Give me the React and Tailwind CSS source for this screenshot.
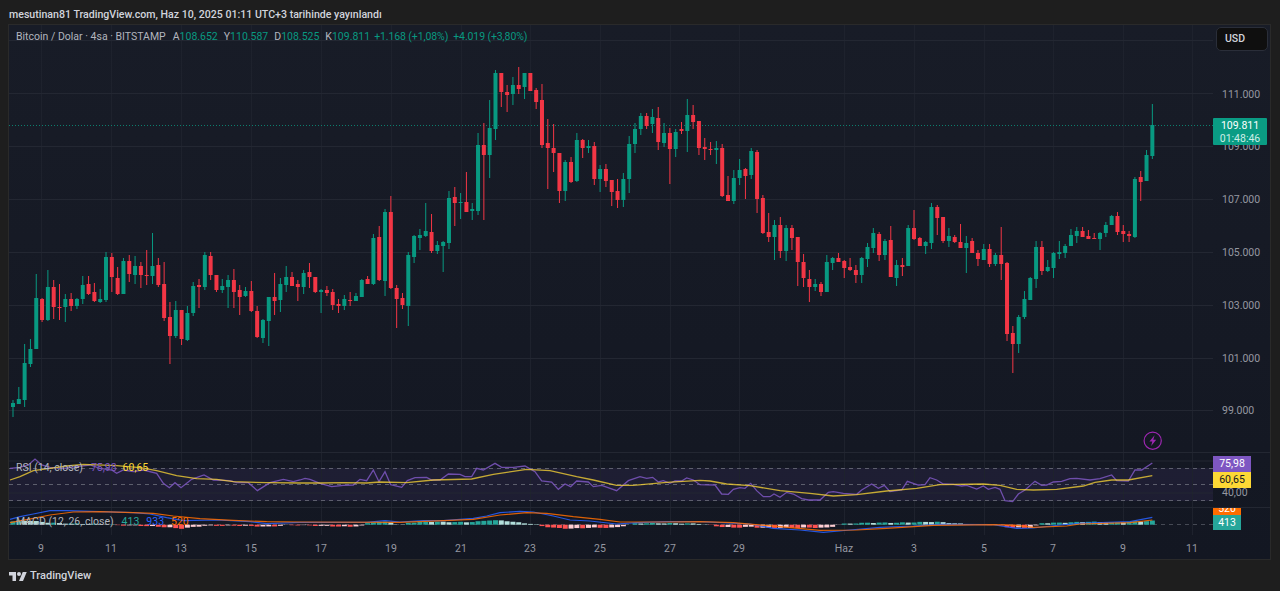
// BTC/USD chart snapshot. All chart drawing data is in page pixel coordinates.
const GREEN = '#089981';
const RED = '#f23645';

// [bodyTop, bodyBottom, wickTop, wickBottom, up]
const candles = [
  [403,407,400,417,1],[399,404,387,404,1],[363,400,344,407,1],[349,364,339,367,1],[298,349,274,349,1],
  [299,320,298,322,0],[287,320,270,321,1],[287,307,280,319,0],[307,308,284,320,0],[299,307,294,322,1],
  [299,306,293,311,0],[299,306,298,309,1],[285,299,276,304,1],[284,294,276,295,0],[292,301,283,302,0],
  [299,302,289,303,1],[257,300,252,302,1],[257,277,253,292,0],[278,294,267,295,0],[261,294,258,294,1],
  [261,274,255,282,0],[266,275,256,284,1],[266,275,262,288,0],[275,276,250,285,0],[266,276,233,284,1],
  [265,285,258,287,0],[284,318,262,321,0],[317,336,302,364,0],[310,336,301,338,1],[310,339,310,345,0],
  [313,340,306,341,1],[286,313,282,316,1],[285,287,279,308,0],[255,287,252,290,1],[256,275,252,280,0],
  [275,290,275,292,0],[286,290,279,293,1],[280,287,275,308,1],[280,292,269,308,0],[290,297,285,315,0],
  [291,296,287,297,1],[291,311,281,312,0],[311,337,306,338,0],[320,338,319,343,1],[297,321,297,346,1],
  [297,301,273,315,0],[284,300,278,312,1],[277,285,266,292,1],[277,286,272,286,0],[284,287,280,301,0],
  [273,287,270,294,1],[272,277,263,288,0],[277,292,277,293,0],[290,292,289,313,1],[290,293,286,296,0],
  [292,305,289,310,0],[304,306,299,313,0],[299,306,295,310,1],[300,301,292,306,0],[296,301,293,301,1],
  [280,297,279,297,1],[279,284,276,284,0],[238,284,234,285,1],[237,280,226,281,0],[212,281,209,296,1],
  [212,288,196,289,0],[288,299,285,328,0],[298,305,293,309,0],[255,306,252,326,1],[236,257,235,263,1],
  [235,238,229,250,1],[231,236,203,237,1],[232,251,214,253,0],[245,251,241,254,1],[242,246,241,272,1],
  [198,243,191,249,1],[197,203,187,226,0],[202,203,193,219,1],[202,212,172,212,0],[209,211,203,220,1],
  [145,211,133,215,1],[145,155,123,220,0],[128,155,100,178,1],[73,129,70,140,1],[73,92,73,107,0],
  [92,95,85,112,0],[85,94,77,105,1],[85,89,67,94,0],[73,87,73,99,1],[73,91,73,91,0],
  [90,102,88,109,0],[100,145,84,148,0],[143,148,119,189,0],[148,153,124,172,0],[153,191,153,203,0],
  [162,191,160,201,1],[162,182,157,183,0],[140,181,133,182,1],[140,148,139,158,0],[146,148,140,153,1],
  [146,179,142,185,0],[169,179,165,192,1],[169,181,164,187,0],[180,192,180,206,0],[191,200,179,208,0],
  [179,200,173,207,1],[144,179,136,193,1],[129,144,123,153,1],[116,129,113,135,1],[116,126,113,129,0],
  [117,124,109,133,1],[118,142,107,150,0],[133,143,123,147,1],[133,149,128,184,0],[132,149,129,157,1],
  [129,131,122,134,0],[115,131,99,152,1],[115,122,105,129,0],[121,148,121,155,0],[147,149,138,160,0],
  [149,150,142,155,0],[148,150,141,164,1],[148,196,144,197,0],[195,201,176,201,0],[178,201,170,204,1],
  [170,178,159,185,1],[169,176,168,199,0],[151,175,148,179,1],[152,199,150,213,0],[198,233,195,234,0],
  [232,237,213,242,0],[225,237,220,260,1],[225,251,217,258,0],[228,251,225,261,1],[228,238,225,250,0],
  [237,262,237,286,0],[262,278,254,287,0],[279,287,270,302,0],[284,287,279,291,1],[284,292,282,296,0],
  [262,292,255,292,1],[258,263,257,270,1],[258,262,253,262,0],[261,268,260,278,0],[267,270,258,271,0],
  [270,275,265,283,0],[258,275,257,283,1],[247,259,243,267,1],[233,248,228,253,1],[234,255,232,261,0],
  [241,255,239,260,1],[240,277,226,277,0],[265,278,260,286,1],[265,267,258,276,0],[228,266,225,266,1],
  [228,239,210,240,0],[238,246,237,246,0],[242,246,241,254,1],[207,243,203,249,1],[207,218,205,235,0],
  [217,241,217,243,0],[236,241,228,247,1],[237,242,235,243,0],[242,248,224,248,0],[243,248,236,273,1],
  [241,253,238,253,0],[253,259,250,266,0],[249,260,244,260,1],[249,264,244,267,0],[255,264,253,266,1],
  [255,264,227,280,0],[263,334,262,341,0],[333,344,326,373,0],[317,344,315,353,1],[299,317,291,319,1],
  [278,300,277,300,1],[247,279,241,288,1],[247,271,241,275,0],[267,271,260,272,1],[253,268,252,278,1],
  [252,254,241,259,1],[246,253,244,258,1],[235,246,229,246,1],[231,236,227,243,1],[231,237,227,237,0],
  [236,239,230,239,0],[238,239,233,239,0],[233,239,232,250,1],[225,233,222,237,1],[216,225,215,225,1],
  [216,232,212,235,0],[231,234,225,242,0],[234,236,231,242,0],[179,237,177,238,1],[177,182,171,201,0],
  [155,181,150,181,1],[125,156,104,159,1],
];
const candleX = (i) => 13 + 5.813 * i;

// points read off 3x crops: [x*3, y*3] relative to an origin
const pts = (ox, oy, list) => list.map(([x, y]) => `${ox + x / 3},${oy + y / 3}`).join(' ');

const rsiLine = [
  pts(0, 440, [[30,85],[60,82],[85,75],[105,57],[125,75],[150,82],[190,85],[230,80],[270,75],[300,85],[335,90],[350,100],[370,90],[400,95],[430,90],[470,100],[490,130],[508,143],[525,128],[543,143],[575,118],[612,105],[640,120],[690,122],[710,128],[745,128],[772,152],[810,128],[850,118],[880,125]]),
  pts(300, 450, [[0,90],[15,85],[30,88],[60,100],[95,110],[130,106],[160,105],[180,88],[200,92],[220,60],[237,95],[255,65],[272,104],[305,112],[322,92],[345,83],[380,82],[395,90],[420,90],[445,72],[480,73],[495,80],[515,80],[530,55],[550,60],[585,40],[605,52],[640,52],[675,48],[705,65],[725,93],[755,96],[775,118],[795,102],[812,110],[830,93],[865,96],[880,110],[905,106],[950,122],[985,92],[1020,80],[1040,85],[1058,82],[1075,96],[1090,92],[1110,100],[1125,93],[1145,93],[1160,84],[1180,90]]),
  pts(700, 450, [[0,104],[45,105],[65,132],[85,133],[100,118],[120,113],[135,115],[152,100],[170,122],[190,140],[210,140],[222,132],[240,142],[260,127],[280,132],[305,146],[325,150],[360,150],[385,127],[400,125],[430,130],[470,133],[485,120],[515,102],[535,115],[553,106],[570,125],[605,120],[622,94],[655,105],[675,104],[690,83],[710,90],[730,102],[760,103],[785,108],[800,106],[830,117],[850,108],[865,118],[885,112],[900,118],[915,152],[938,155],[955,132],[975,120],[1005,94],[1025,106],[1040,105],[1060,96],[1085,94],[1110,86],[1130,85],[1170,90]]),
  pts(1080, 420, [[60,176],[95,165],[110,182],[145,183],[165,150],[185,150],[217,129]]),
].join(' ');

const rsiMa = [
  pts(0, 440, [[30,120],[60,110],[100,92],[150,85],[200,78],[250,73],[350,77],[420,83],[470,92],[530,107],[590,116],[650,118],[700,125],[800,128]]),
  pts(300, 450, [[0,99],[60,99],[130,98],[200,99],[240,96],[320,98],[400,90],[515,87],[580,73],[680,58],[750,62],[830,80],[880,90],[950,106],[1000,106],[1100,97]]),
  pts(700, 450, [[0,91],[30,93],[80,102],[150,107],[240,122],[330,130],[400,138],[470,134],[560,123],[650,115],[720,104],[850,102],[900,106],[950,118],[1000,120],[1070,118],[1150,108]]),
  pts(1080, 420, [[45,187],[95,180],[145,180],[217,167]]),
].join(' ');

const macdBlue = [
  pts(0, 440, [[30,238],[60,230],[100,222],[150,212],[200,212],[300,215],[400,218],[450,222],[500,233],[550,242],[650,240],[750,245],[800,251]]),
  pts(300, 450, [[0,217],[200,217],[255,212],[300,216],[370,212],[430,212],[520,205],[560,198],[600,188],[660,184],[700,186],[760,198],[810,210],[870,213],[950,222],[1010,218],[1100,215]]),
  pts(700, 450, [[0,215],[150,222],[220,235],[300,240],[370,247],[450,240],[540,232],[640,228],[720,223],[880,224],[950,235],[1000,234],[1080,225]]),
  pts(1080, 420, [[0,310],[150,305],[217,292]]),
].join(' ');

const macdOrange = [
  pts(0, 440, [[30,248],[100,235],[150,225],[220,216],[300,215],[400,218],[460,220],[520,228],[600,236],[700,241],[800,245]]),
  pts(300, 450, [[0,216],[300,217],[430,212],[520,208],[600,195],[680,188],[740,190],[820,200],[900,208],[960,216],[1100,216]]),
  pts(700, 450, [[0,215],[100,218],[240,230],[360,241],[470,240],[560,235],[700,226],[880,224],[950,226],[1000,232],[1100,228]]),
  pts(1080, 420, [[0,312],[150,308],[217,300]]),
].join(' ');

// histogram outline: [x, height above the zero line]
const histKeys = [
  [10,3],[20,4],[30,4],[40,3],[50,2],[60,1.5],[80,1],[110,.5],[116,-.5],[140,-1],[160,-2],[172,-3],[180,-4],[192,-2.5],[205,-1],
  [240,-1],[270,-2],[285,-.5],[300,-.5],[330,-1.5],[350,-2],[362,-1],[370,2.5],[390,3],[400,-1],[408,2],[430,3],[465,2.5],[476,3],[490,4.5],[505,4],[520,2],[535,.5],
  [540,-1],[552,-3],[570,-4],[590,-3],[615,-3],[620,-2],[636,1.5],[670,1.5],[700,1],[720,-2],[735,-3],[750,-2],[760,-3],[830,-3],[836,-.5],[845,1],[870,2],[900,2],[935,3],[960,1],[1000,-.5],
  [1010,-3],[1033,-3],[1040,1.5],[1060,2],[1090,3],[1113,2],[1133,3],[1155,4],
];
const histAt = (x) => {
  for (let k = 1; k < histKeys.length; k++) {
    const [x0, v0] = histKeys[k - 1];
    const [x1, v1] = histKeys[k];
    if (x <= x1) return v0 + ((v1 - v0) * (x - x0)) / (x1 - x0);
  }
  return 0;
};
const histBars = candles.map((_, i) => {
  const x = candleX(i);
  const v = histAt(x) + 0.3 * Math.sin(i * 1.9);
  const prev = i ? histAt(candleX(i - 1)) + 0.3 * Math.sin((i - 1) * 1.9) : v;
  const fill = v >= 0 ? (v >= prev ? '#26a69a' : '#b2dfdb') : v <= prev ? '#ff5252' : '#ffcdd2';
  return { x, v, fill };
});

const timeLabels = [
  [41,'9'],[111,'11'],[181,'13'],[251,'15'],[321,'17'],[391,'19'],[461,'21'],[530,'23'],[600,'25'],[670,'27'],[739,'29'],
  [844,'Haz'],[914,'3'],[984,'5'],[1053,'7'],[1123,'9'],[1192,'11'],
];
const priceLabels = ['111.000', '109.000', '107.000', '105.000', '103.000', '101.000', '99.000'];
const priceGrid = [40, 93, 146, 199, 252, 305, 358, 410];

function VerticalGrid({ y1, y2 }) {
  return timeLabels.map(([x]) => <line key={x} x1={x + 0.5} x2={x + 0.5} y1={y1} y2={y2} stroke="#1e222d" />);
}

function MainPane() {
  return (
    <div className="relative flex h-[427px]">
      <svg className="block h-[427px] w-[1204px]" viewBox="9 25 1204 427">
        <VerticalGrid y1={25} y2={452} />
        {priceGrid.map((y) => (
          <line key={y} x1={9} x2={1213} y1={y + 0.5} y2={y + 0.5} stroke="#232732" />
        ))}
        <line x1={9} x2={1213} y1={125.5} y2={125.5} stroke="#0b8a75" strokeOpacity="0.9" strokeDasharray="1 2" />
        {candles.map(([top, bottom, wickTop, wickBottom, up], i) => {
          const x = candleX(i);
          const color = up ? GREEN : RED;
          return (
            <g key={i} fill={color}>
              <rect x={x - 0.5} y={wickTop} width={1} height={wickBottom - wickTop} />
              <rect x={x - 2} y={top} width={4} height={Math.max(bottom - top, 1)} />
            </g>
          );
        })}
        <circle cx="1152.7" cy="440.7" r="8.6" fill="none" stroke="#9c27b0" strokeWidth="1.2" />
        <path d="M1154.6 435.2l-5.2 6.4h2.9l-1.1 4.3 5-6.2h-2.9z" fill="#9c27b0" />
      </svg>
      <div className="flex w-[57px] flex-col items-start text-[10.5px] text-[#9598a1]">
        <div className="mt-[2px] ml-[3px] flex h-6 w-[52px] shrink-0 items-center rounded-[5px] border border-[#2a2e39] bg-[#0f0f0f] pl-2 font-medium text-[#d1d4dc]">
          USD
        </div>
        <div className="mt-[17px] ml-[9px] flex flex-col">
          {priceLabels.map((p) => (
            <div key={p} className="flex h-[52.8px] w-[47px] items-center">
              {p}
            </div>
          ))}
        </div>
      </div>
      <div className="absolute top-[93px] right-[3px] flex h-[27px] w-[54px] flex-col items-center justify-center rounded-[1px] bg-[#0a9c84] text-[10.5px] leading-[13px] text-white">
        <span>109.811</span>
        <span className="text-[#cdeee7]">01:48:46</span>
      </div>
      <div className="absolute top-[5px] left-[7px] flex text-[10.5px] leading-[14px] whitespace-nowrap text-[#b2b5be]">
        <span className="mr-[7px]">Bitcoin / Dolar · 4sa · BITSTAMP</span>
        <span className="mr-[6px]">A<span className="text-[#089981]">108.652</span></span>
        <span className="mr-[6px]">Y<span className="text-[#089981]">110.587</span></span>
        <span className="mr-[6px]">D<span className="text-[#089981]">108.525</span></span>
        <span className="mr-[4px]">K<span className="text-[#089981]">109.811</span></span>
        <span className="mr-[5px] tracking-[-0.1px] text-[#089981]">+1.168 (+1,08%)</span>
        <span className="tracking-[-0.1px] text-[#089981]">+4.019 (+3,80%)</span>
      </div>
    </div>
  );
}

function RsiPane() {
  return (
    <div className="relative flex h-[55px] border-t border-[#232732]">
      <svg className="block h-[54px] w-[1204px]" viewBox="9 453 1204 54">
        <rect x="9" y="468" width="1204" height="33" fill="#7e57c2" fillOpacity="0.1" />
        <VerticalGrid y1={453} y2={507} />
        <line x1={9} x2={1213} y1={461} y2={461} stroke="#232732" />
        <line x1={9} x2={1213} y1={493} y2={493} stroke="#232732" />
        {[468.5, 484.5, 500.5].map((y) => (
          <line key={y} x1={9} x2={1213} y1={y} y2={y} stroke="#787b86" strokeOpacity="0.7" strokeDasharray="4 4" />
        ))}
        <polyline points={rsiLine} fill="none" stroke="#7e57c2" strokeOpacity="0.85" strokeWidth="1.3" />
        <polyline points={rsiMa} fill="none" stroke="#fdd835" strokeOpacity="0.75" strokeWidth="1.3" />
      </svg>
      <div className="relative w-[57px] text-[10.5px] text-[#9598a1]">
        <div className="absolute top-[32px] left-[9px]">40,00</div>
      </div>
      <div className="absolute top-[3px] right-[19px] flex h-4 w-[38px] items-center justify-center bg-[#7e57c2] text-[10.5px] text-white">
        75,98
      </div>
      <div className="absolute top-[19px] right-[19px] flex h-4 w-[38px] items-center justify-center bg-[#fdd835] text-[10.5px] text-[#131722]">
        60,65
      </div>
      <div className="absolute top-[8px] left-[7px] flex text-[10.5px] leading-[14px] whitespace-nowrap text-[#b2b5be]">
        <span className="mr-[8px]">RSI (14, close)</span>
        <span className="mr-[6px] text-[#7e57c2]">75,98</span>
        <span className="text-[#fdd835]">60,65</span>
      </div>
    </div>
  );
}

function MacdPane() {
  return (
    <div className="relative flex h-[28px] border-t border-[#232732]">
      <svg className="block h-[27px] w-[1204px]" viewBox="9 508 1204 27">
        <VerticalGrid y1={508} y2={535} />
        <line x1={9} x2={1213} y1={524.5} y2={524.5} stroke="#787b86" strokeOpacity="0.5" strokeDasharray="4 4" />
        {histBars.map(({ x, v, fill }) => (
          <rect key={x} x={x - 2.5} y={v >= 0 ? 524.7 - v : 524.7} width={5} height={Math.abs(v)} fill={fill} />
        ))}
        <polyline points={macdBlue} fill="none" stroke="#2962ff" strokeOpacity="0.85" strokeWidth="1.2" />
        <polyline points={macdOrange} fill="none" stroke="#ff6d00" strokeOpacity="0.85" strokeWidth="1.2" />
      </svg>
      <div className="absolute top-0 right-[29px] flex h-[7px] w-[28px] items-end justify-center overflow-hidden bg-[#ff6d00] text-[10.5px] leading-[13px] text-white">
        520
      </div>
      <div className="absolute top-[7px] right-[29px] flex h-[15px] w-[28px] items-center justify-center bg-[#26a69a] text-[10.5px] text-white">
        413
      </div>
      <div className="absolute top-[7px] left-[7px] flex text-[10.5px] leading-[14px] whitespace-nowrap text-[#b2b5be]">
        <span className="mr-[8px]">MACD (12, 26, close)</span>
        <span className="mr-[7px] text-[#26a69a]">413</span>
        <span className="mr-[7px] text-[#2962ff]">933</span>
        <span className="text-[#ff6d00]">520</span>
      </div>
    </div>
  );
}

function TimeAxis() {
  return (
    <div className="relative h-6 text-[10.5px] text-[#9598a1]">
      {timeLabels.map(([x, label]) => (
        <span key={x} className="absolute top-[6px] -translate-x-1/2" style={{ left: x - 9 }}>
          {label}
        </span>
      ))}
    </div>
  );
}

export default function App() {
  return (
    <div className="flex h-[591px] w-[1280px] flex-col overflow-hidden bg-[#1e1e1e] [font-family:Roboto,sans-serif]">
      <header className="flex h-6 shrink-0 items-center pt-[5px] pl-[9px] text-[10.6px] font-medium text-[#d1d4dc]">
        mesutinan81 TradingView.com, Haz 10, 2025 01:11 UTC+3 tarihinde yayınlandı
      </header>
      <main className="ml-2 w-[1263px] shrink-0 border border-[#2a2a2a] bg-gradient-to-b from-[#181c27] to-[#131722]">
        <MainPane />
        <RsiPane />
        <MacdPane />
        <TimeAxis />
      </main>
      <footer className="flex flex-1 items-center gap-[3px] pt-[2px] pl-[9px] text-[11px] font-medium text-[#d1d4dc]">
        <svg width="18" height="14" viewBox="0 0 36 28" fill="#d1d4dc">
          <path d="M14 22H7V11H0V4h14v18zM28 22h-8l7.5-18h8L28 22z" />
          <circle cx="20" cy="8" r="4" />
        </svg>
        <span>TradingView</span>
      </footer>
    </div>
  );
}
